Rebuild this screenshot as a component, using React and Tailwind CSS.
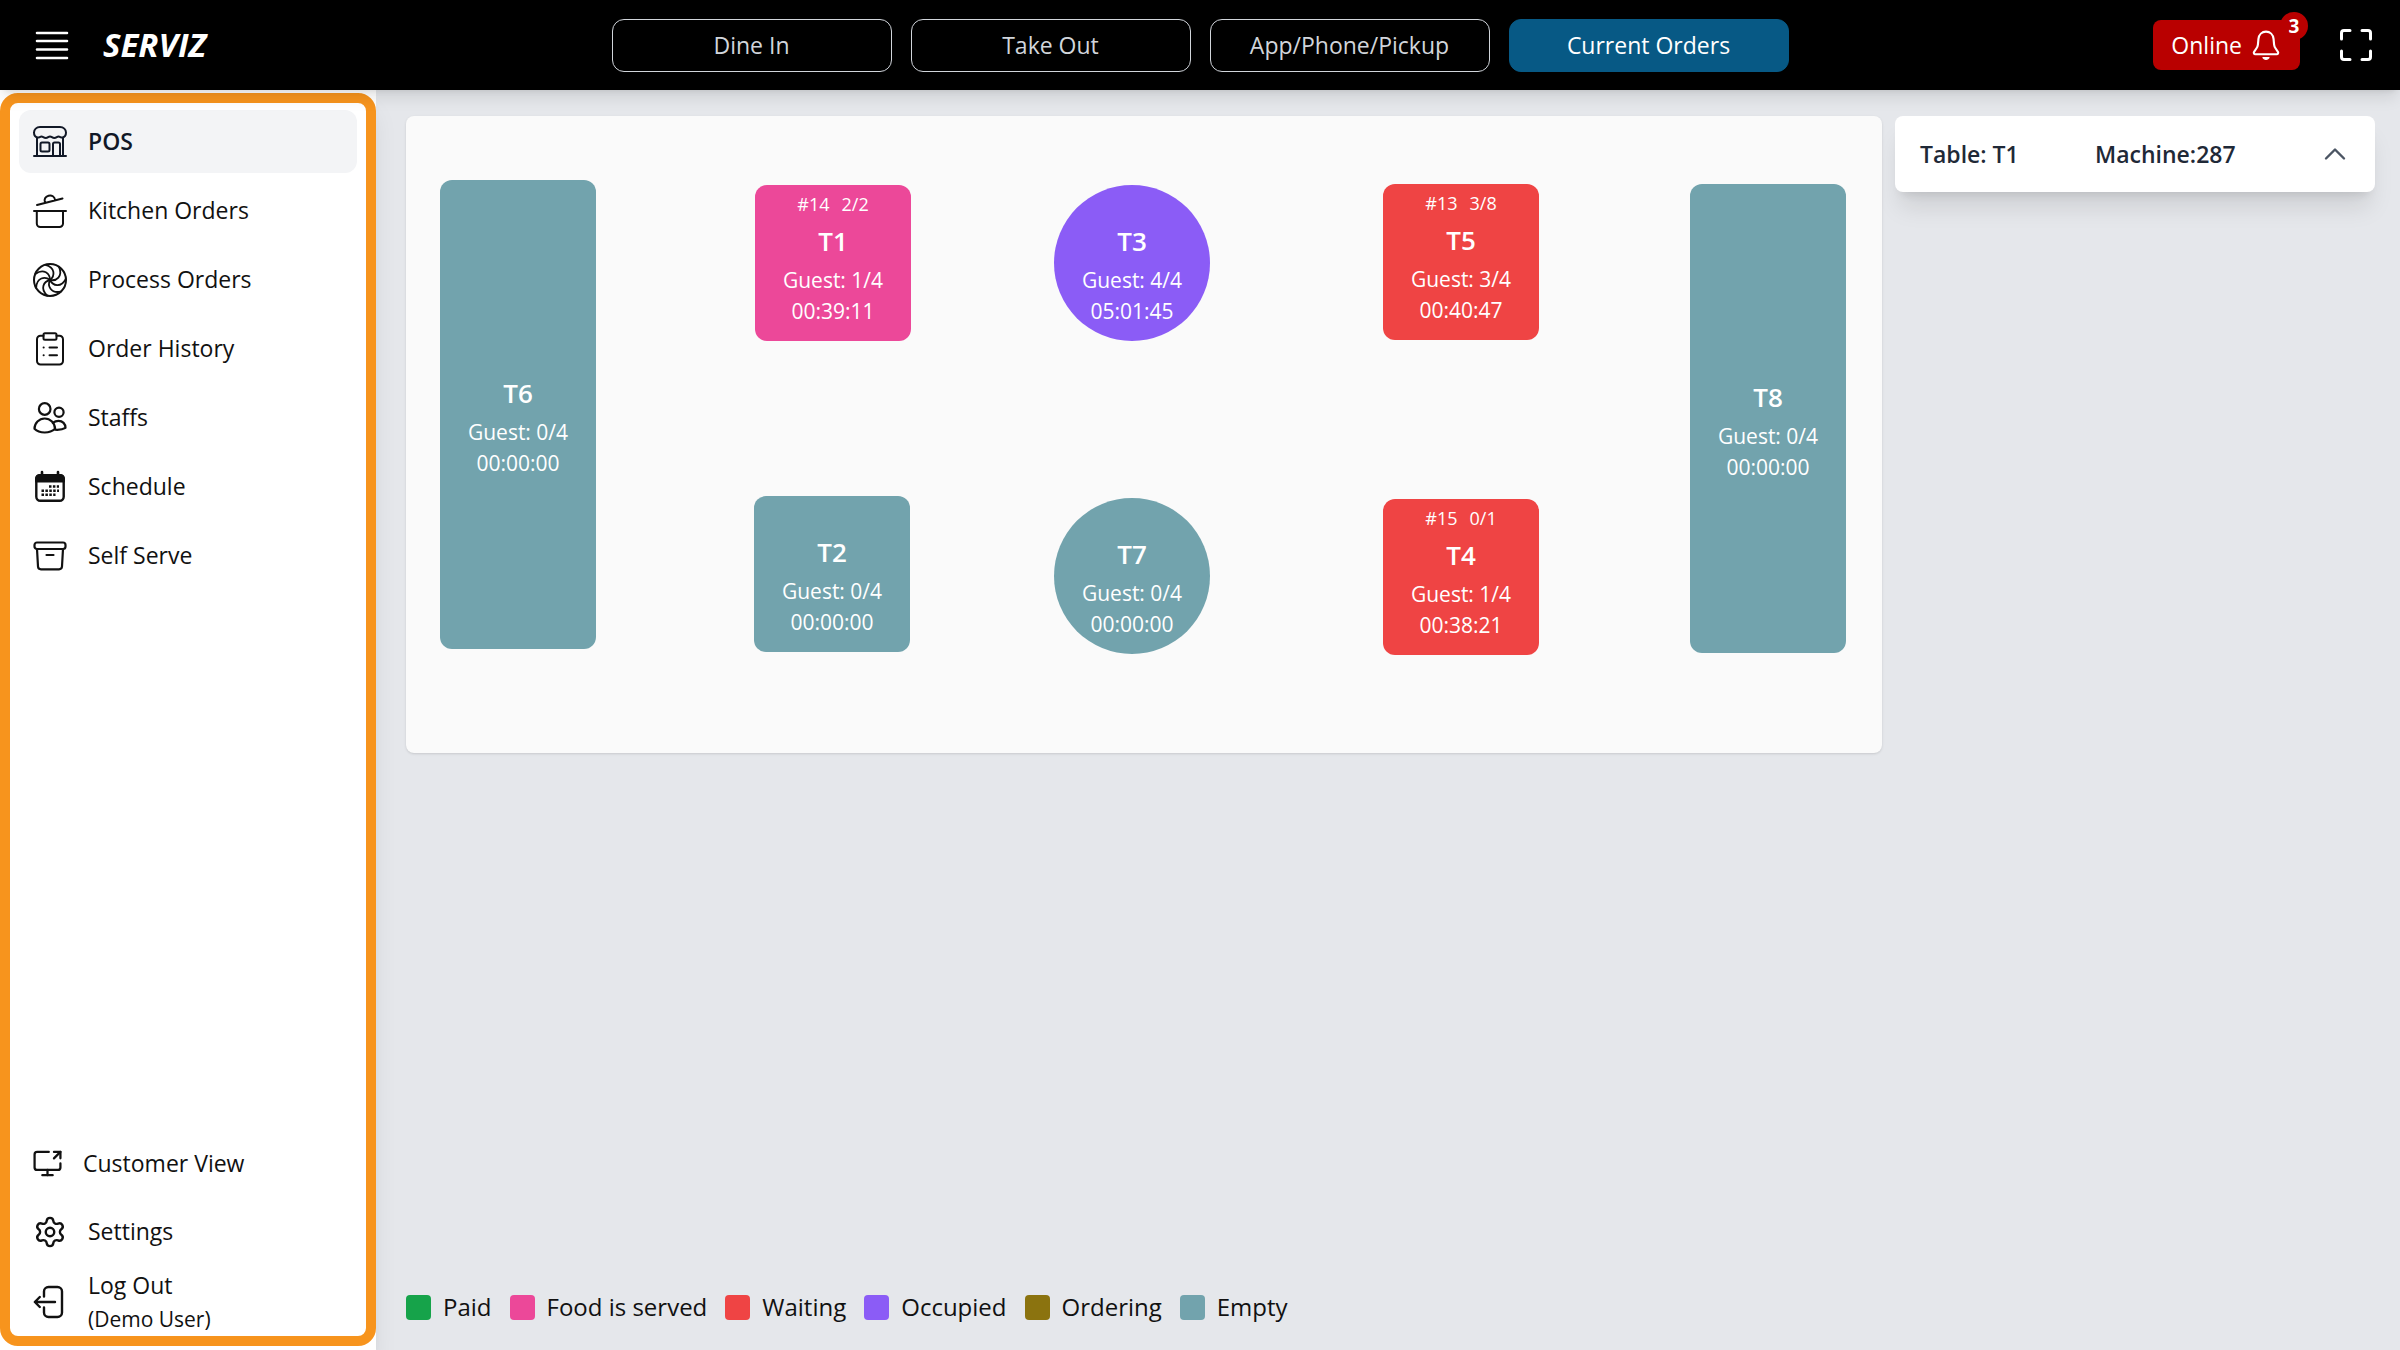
import React, { useState } from 'react';
import { ScreenShare, Settings, ChevronUp } from 'lucide-react';

const Icon = ({ children, className = "size-9", width = 2 }) => (
  <svg viewBox="0 0 36 36" className={`${className} shrink-0`} fill="none" stroke="currentColor" strokeWidth={width} strokeLinecap="round" strokeLinejoin="round" aria-hidden="true">
    {children}
  </svg>
);

const StoreIcon = () => (
  <Icon>
    <path d="M8 3h20c3.500 0 6 2.500 6 5.500 0 3-1.500 4.500-3.500 5-1.500.4-2.500-1-4-1s-2 1.500-4.200 1.500-2.500-1.500-4.300-1.500-2 1.500-4.200 1.500S11 12.500 9.500 12.500s-2.500 1.400-4 1C3.500 13 2 11.500 2 8.500 2 5.500 4.500 3 8 3z" />
    <path d="M5 14v18M31 14v18M2 32h32" />
    <rect x="8.500" y="18.500" width="9" height="9" rx="1.500" />
    <path d="M21 32V20a1.500 1.500 0 0 1 1.500-1.500h4A1.500 1.500 0 0 1 28 20v12" />
  </Icon>
);

const PotIcon = () => (
  <Icon>
    <path d="M5 12l25.500-6.500M13 9.500c-1.200-3 .2-6 3.500-6.800s6.300.8 6.500 4.300" />
    <path d="M2 18h32M4.800 18v12.500a3.500 3.500 0 0 0 3.500 3.500h19.200a3.500 3.500 0 0 0 3.500-3.500V18" />
  </Icon>
);

const PinwheelIcon = () => (
  <Icon width={1.8}>
    <circle cx="18" cy="18" r="16" strokeWidth="2" />
    {[0, 51, 103, 154, 206, 257, 309].map((deg) => (
      <path key={deg} d="M18 18c5-4 5.500-12.500-4.500-15.200" transform={`rotate(${deg} 18 18)`} />
    ))}
  </Icon>
);

const ClipboardIcon = () => (
  <Icon>
    <path d="M11.500 4.800H8.500A3.500 3.500 0 0 0 5 8.300v21.700a3.500 3.500 0 0 0 3.500 3.500h19a3.500 3.500 0 0 0 3.500-3.500V8.300a3.500 3.500 0 0 0-3.500-3.500h-3" />
    <rect x="11.500" y="2.300" width="13" height="6.400" rx="1.500" />
    <path d="M11.600 16.500h.1M17.500 16.500h7.500M11.600 24.200h.1M17.500 24.200h7.500" />
  </Icon>
);

const StaffIcon = () => (
  <Icon width={2.2}>
    <circle cx="12.700" cy="9" r="5.800" />
    <circle cx="27" cy="12.200" r="4.600" />
    <path d="M2.500 28.800c0-5.600 4.500-10.300 10.200-10.300s10.300 4.700 10.300 10.300c-2.600 2.500-6.300 3.700-10.300 3.700s-7.800-1.200-10.200-3.700z" />
    <path d="M20.800 22.800c1.700-1.300 3.700-2 5.700-2 4.200 0 7 3.200 7 7-2.600 1.700-6.200 2.200-10.500 1.900" />
  </Icon>
);

const CalendarIcon = () => (
  <Icon>
    <rect x="4.300" y="6.300" width="27.400" height="25.400" rx="4" strokeWidth="2.400" />
    <path d="M4 12.500V9.500A3.500 3.500 0 0 1 7.500 6h21A3.500 3.500 0 0 1 32 9.500v3z" fill="currentColor" />
    <path d="M10 3v4M26 3v4" strokeWidth="2.600" />
    <path d="M17 17.500h10M9.500 21.700h17.500M9.500 25.800h14" strokeWidth="2.400" strokeLinecap="butt" strokeDasharray="2.500 1.400" />
  </Icon>
);

const BoxIcon = () => (
  <Icon width={2.2}>
    <rect x="2.500" y="4.500" width="31" height="6.500" rx="2.500" />
    <path d="M5 11l1 17.500a3 3 0 0 0 3 2.800h18a3 3 0 0 0 3-2.800L31 11M14.500 17h7" />
  </Icon>
);

const LogoutIcon = () => (
  <Icon width={2.4}>
    <path d="M12 12.500V7.500A4.500 4.500 0 0 1 16.500 3h9A4.500 4.500 0 0 1 30 7.500v21a4.500 4.500 0 0 1-4.500 4.500h-9a4.500 4.500 0 0 1-4.500-4.500v-5" />
    <path d="M23 18H3M7.800 13l-5 5 5 5" />
  </Icon>
);

const BellIcon = () => (
  <Icon className="size-8" width={2.4}>
    <path d="M18 3c-4.600 0-8 3.400-8.500 8.200l-.6 6.300c-.2 1.400-.6 2.700-1.400 3.900l-2.900 4.300c-.8 1.200 0 2.700 1.400 2.700h24c1.400 0 2.200-1.500 1.400-2.700l-2.900-4.300c-.8-1.200-1.200-2.500-1.400-3.900l-.6-6.300C26 6.400 22.600 3 18 3z" />
    <path d="M14.500 32.200c1 1.400 2.200 2 3.500 2s2.500-.6 3.500-2z" fill="currentColor" strokeWidth="1.200" />
  </Icon>
);

const FullscreenIcon = () => (
  <Icon width={3}>
    <path d="M3.500 12V6A2.500 2.500 0 0 1 6 3.500h6M24 3.500h6A2.500 2.500 0 0 1 32.500 6v6M32.500 24v6a2.500 2.500 0 0 1-2.500 2.500h-6M12 32.500H6A2.500 2.500 0 0 1 3.500 30v-6" />
  </Icon>
);

const menu = [
  { name: "POS", icon: <StoreIcon /> },
  { name: "Kitchen Orders", icon: <PotIcon /> },
  { name: "Process Orders", icon: <PinwheelIcon /> },
  { name: "Order History", icon: <ClipboardIcon /> },
  { name: "Staffs", icon: <StaffIcon /> },
  { name: "Schedule", icon: <CalendarIcon /> },
  { name: "Self Serve", icon: <BoxIcon /> },
];

const tabs = ["Dine In", "Take Out", "App/Phone/Pickup", "Current Orders"];

const tables = [
  { name: "T6", guest: "0/4", time: "00:00:00", color: "bg-[#72a3ad]", pos: "left-[34px] top-16", shape: "h-[469px] rounded-xl" },
  { name: "T1", order: "#14", items: "2/2", guest: "1/4", time: "00:39:11", color: "bg-[#ec4899]", pos: "left-[349px] top-[69px]", shape: "h-[156px] rounded-xl" },
  { name: "T3", guest: "4/4", time: "05:01:45", color: "bg-[#8b5cf6]", pos: "left-[648px] top-[69px]", shape: "h-[156px] rounded-full" },
  { name: "T5", order: "#13", items: "3/8", guest: "3/4", time: "00:40:47", color: "bg-[#ef4444]", pos: "left-[977px] top-[68px]", shape: "h-[156px] rounded-xl" },
  { name: "T8", guest: "0/4", time: "00:00:00", color: "bg-[#72a3ad]", pos: "left-[1284px] top-[68px]", shape: "h-[469px] rounded-xl" },
  { name: "T2", guest: "0/4", time: "00:00:00", color: "bg-[#72a3ad]", pos: "left-[348px] top-[380px]", shape: "h-[156px] rounded-xl" },
  { name: "T7", guest: "0/4", time: "00:00:00", color: "bg-[#72a3ad]", pos: "left-[648px] top-[382px]", shape: "h-[156px] rounded-full" },
  { name: "T4", order: "#15", items: "0/1", guest: "1/4", time: "00:38:21", color: "bg-[#ef4444]", pos: "left-[977px] top-[383px]", shape: "h-[156px] rounded-xl" },
];

const legend = [
  { label: "Paid", color: "bg-[#16a34a]" },
  { label: "Food is served", color: "bg-[#ec4899]" },
  { label: "Waiting", color: "bg-[#ef4444]" },
  { label: "Occupied", color: "bg-[#8b5cf6]" },
  { label: "Ordering", color: "bg-[#8b730f]" },
  { label: "Empty", color: "bg-[#72a3ad]" },
];

const TableNode = ({ table }) => (
  <button className={`absolute flex w-[156px] flex-col items-center justify-center pt-[22px] text-white ${table.color} ${table.pos} ${table.shape}`}>
    {table.order && (
      <span className="absolute inset-x-0 top-[5px] flex justify-center gap-3 text-lg leading-7">
        <span>{table.order}</span>
        <span>{table.items}</span>
      </span>
    )}
    <span className="mb-1 text-[26px] leading-10 font-semibold">{table.name}</span>
    <span className="text-[21px] leading-[31px]">Guest: {table.guest}</span>
    <span className="text-[21px] leading-[31px]">{table.time}</span>
  </button>
);

const App = () => {
  const [page, setPage] = useState("POS");
  const [tab, setTab] = useState("Current Orders");

  return (
    <div className="flex min-h-screen flex-col bg-[#e5e7eb] font-['Open_Sans','Noto_Sans',sans-serif] text-[23px] text-[#111]">
      <header className="relative z-10 grid h-[90px] grid-cols-[1fr_auto_1fr] items-center bg-black px-[26px] text-white shadow-lg">
        <div className="flex items-center gap-[33px] pl-2">
          <button aria-label="Menu">
            <Icon width={2.6}>
              <path d="M3 6h30M3 14h30M3 22.500h30M3 31h30" />
            </Icon>
          </button>
          <h1 className="text-[33px] font-bold italic">SERVIZ</h1>
        </div>
        <nav className="flex gap-[19px]">
          {tabs.map((t) => (
            <button
              key={t}
              onClick={() => setTab(t)}
              className={`h-[53px] w-[280px] rounded-xl border ${tab === t ? 'border-[#075985] bg-[#075985] text-white' : 'border-[#d1d5db] text-[#d1d5db]'}`}
            >
              {t}
            </button>
          ))}
        </nav>
        <div className="flex items-center justify-end gap-[38px]">
          <button className="relative flex h-[50px] items-center gap-2 rounded-lg bg-[#b90000] px-[18px]">
            Online
            <BellIcon />
            <span className="absolute -top-2 -right-2 flex size-7 items-center justify-center rounded-full bg-[#b90000] text-[19px] font-bold">3</span>
          </button>
          <button aria-label="Full screen"><FullscreenIcon /></button>
        </div>
      </header>

      <div className="flex flex-1">
        <aside className="flex w-[376px] shrink-0 flex-col bg-white pt-[3px] pb-1 shadow-xl">
          <div className="flex flex-1 flex-col justify-between rounded-[18px] border-10 border-[#f7941d] px-[9px] pt-[7px]">
            <nav className="flex flex-col gap-1.5">
              {menu.map((item) => (
                <a
                  key={item.name}
                  href="#"
                  onClick={() => setPage(item.name)}
                  className={`flex h-[63px] items-center gap-5 rounded-xl pl-[13px] ${page === item.name ? 'bg-[#f3f4f6] font-semibold text-[#111827]' : ''}`}
                >
                  {item.icon}
                  {item.name}
                </a>
              ))}
            </nav>
            <div className="flex flex-col gap-[5px]">
              <button className="flex h-[63px] items-center gap-5 pl-[13px]">
                <ScreenShare className="size-[31px] shrink-0" strokeWidth={1.75} />
                Customer View
              </button>
              <a href="#" className="flex h-[63px] items-center gap-5 pl-[13px]">
                <Settings className="mx-px size-[34px] shrink-0" strokeWidth={1.7} />
                Settings
              </a>
              <button className="flex items-center gap-5 pl-[13px] text-left leading-[34px]">
                <LogoutIcon />
                <span className="flex flex-col">
                  Log Out
                  <span className="text-[21px]">(Demo User)</span>
                </span>
              </button>
            </div>
          </div>
        </aside>

        <main className="flex flex-1 flex-col justify-between pt-[26px] pr-[25px] pb-6 pl-[30px]">
          <div className="flex items-start gap-[13px]">
            <section className="relative h-[637px] flex-1 rounded-lg bg-[#fafafa] shadow-sm">
              {tables.map((t) => <TableNode key={t.name} table={t} />)}
            </section>
            <button className="grid w-[480px] grid-cols-[175px_1fr_auto] items-center rounded-lg bg-white py-5 pr-[22px] pl-[25px] text-left font-semibold text-[#1f2937] shadow-xl">
              <span>Table: T1</span>
              <span>Machine:287</span>
              <ChevronUp className="size-9 text-[#4b5563]" strokeWidth={1.6} />
            </button>
          </div>
          <ul className="flex gap-[18px] text-2xl">
            {legend.map((l) => (
              <li key={l.label} className="flex items-center gap-3 leading-[38px]">
                <span className={`size-[25px] rounded-sm ${l.color}`} />
                {l.label}
              </li>
            ))}
          </ul>
        </main>
      </div>
    </div>
  );
};

export default App;
